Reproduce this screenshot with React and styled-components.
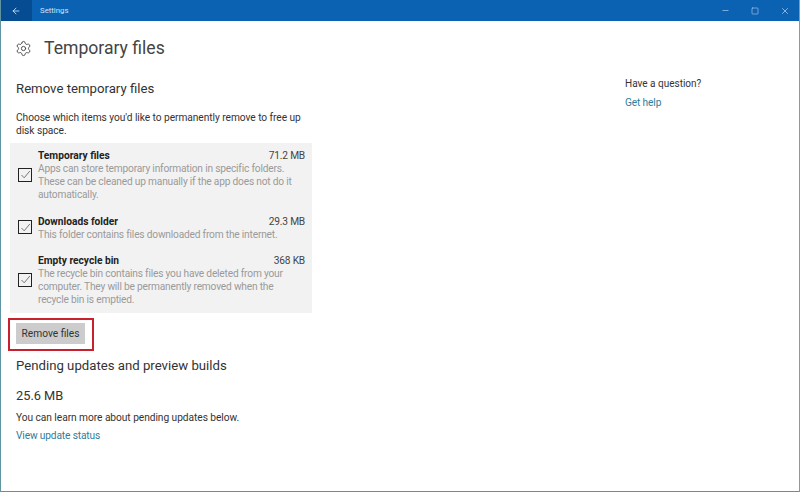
import React from 'react';
import styled, { createGlobalStyle } from 'styled-components';
import { ArrowLeft, Minus, Square, X, Settings } from 'lucide-react';

const Global = createGlobalStyle`
  html, body {
    margin: 0;
    padding: 0;
    background: #fff;
  }
  body {
    font-family: Roboto, "Open Sans", "Liberation Sans", sans-serif;
    color: #333;
  }
`;

const Win = styled.div`
  width: 800px;
  height: 492px;
  box-sizing: border-box;
  display: flex;
  flex-direction: column;
  overflow: hidden;
  background: #fff;
  border-left: 1px solid #5f95a0;
  border-right: 1px solid #8a9aa5;
  border-bottom: 1px solid #6f8a9a;
`;

const TitleBar = styled.div`
  height: 21px;
  flex: none;
  margin-left: -1px;
  margin-right: -1px;
  background: #0b62b3;
  color: #cfe3f5;
  display: flex;
  align-items: center;
`;

const BackBtn = styled.div`
  width: 32px;
  height: 100%;
  background: #054c93;
  display: flex;
  align-items: center;
  justify-content: center;
  color: #d6e6f5;
`;

const AppName = styled.span`
  font-size: 7.8px;
  margin-left: 8px;
  flex: 1;
`;

const WinBtn = styled.div`
  width: 30px;
  display: flex;
  justify-content: center;
  color: #d6e6f5;
`;

const Body = styled.div`
  flex: 1;
  display: grid;
  grid-template-columns: 624px 1fr;
`;

const Main = styled.div`
  padding: 15px 0 0 15px;
`;

const Header = styled.div`
  display: flex;
  align-items: center;
  gap: 12px;
  height: 24px;
  margin-left: -1px;
  color: #444;
`;

const Title = styled.h1`
  margin: 0;
  font-size: 17.6px;
  font-weight: 400;
  line-height: 24px;
  color: #444;
`;

const Heading = styled.h2`
  margin: ${p => p.$top}px 0 0;
  font-size: 13.2px;
  font-weight: 400;
  line-height: 20px;
  color: #333;
`;

const Para = styled.p`
  margin: ${p => p.$top}px 0 0;
  width: 290px;
  font-size: 10.2px;
  letter-spacing: -0.05px;
  line-height: 13px;
  color: #333;
`;

const Panel = styled.div`
  margin: 6px 0 0 -6px;
  width: 302px;
  height: 170px;
  box-sizing: border-box;
  padding: 6px 7px 0 8px;
  background: #f2f2f2;
  display: flex;
  flex-direction: column;
  gap: 13.5px;
`;

const Row = styled.div`
  display: flex;
  align-items: center;
  gap: 6px;
`;

const Check = styled.div`
  width: 14px;
  height: 14px;
  box-sizing: border-box;
  flex: none;
  border: 1.5px solid #222;
  display: flex;
  align-items: center;
  justify-content: center;
  color: #777;
  margin-top: -1px;
`;

const RowText = styled.div`
  flex: 1;
`;

const RowTop = styled.div`
  display: flex;
  justify-content: space-between;
  font-size: 10.2px;
  line-height: 13px;
`;

const RowName = styled.span`
  font-weight: 700;
  color: #222;
`;

const RowSize = styled.span`
  color: #444;
  letter-spacing: -0.2px;
`;

const RowDesc = styled.div`
  font-size: 10.2px;
  letter-spacing: -0.2px;
  line-height: 13px;
  color: #9a9a9a;
  width: 262px;
`;

const BtnFrame = styled.div`
  margin: 5px 0 0 -8px;
  width: 86px;
  height: 33px;
  box-sizing: border-box;
  border: 2px solid #c8202c;
  padding: 3px 6px;
`;

const Btn = styled.div`
  height: 21px;
  width: 69px;
  background: #ccc;
  font-size: 10.2px;
  line-height: 21px;
  text-align: center;
  color: #333;
`;

const Amount = styled.div`
  margin-top: 11px;
  font-size: 12.8px;
  line-height: 18px;
  color: #333;
`;

const Link = styled.a`
  display: block;
  margin-top: ${p => p.$top}px;
  font-size: 10.2px;
  letter-spacing: -0.15px;
  line-height: 13px;
  color: #2f7d9c;
`;

const Side = styled.div`
  padding-top: 56px;
`;

const Question = styled.div`
  font-size: 10px;
  line-height: 13px;
  color: #333;
`;

const rows = [
  {
    name: 'Temporary files',
    size: '71.2 MB',
    desc: 'Apps can store temporary information in specific folders. These can be cleaned up manually if the app does not do it automatically.',
  },
  {
    name: 'Downloads folder',
    size: '29.3 MB',
    desc: 'This folder contains files downloaded from the internet.',
  },
  {
    name: 'Empty recycle bin',
    size: '368 KB',
    desc: 'The recycle bin contains files you have deleted from your computer. They will be permanently removed when the recycle bin is emptied.',
  },
];

const App = () => (
  <Win>
    <Global />
    <TitleBar>
      <BackBtn><ArrowLeft size={10} strokeWidth={2} /></BackBtn>
      <AppName>Settings</AppName>
      <WinBtn><Minus size={9} strokeWidth={1.5} /></WinBtn>
      <WinBtn><Square size={8} strokeWidth={1.5} /></WinBtn>
      <WinBtn><X size={10} strokeWidth={1.5} /></WinBtn>
    </TitleBar>
    <Body>
      <Main>
        <Header>
          <Settings size={17} strokeWidth={1.3} />
          <Title>Temporary files</Title>
        </Header>
        <Heading $top={19}>Remove temporary files</Heading>
        <Para $top={12}>Choose which items you'd like to permanently remove to free up disk space.</Para>
        <Panel>
          {rows.map(r => (
            <Row key={r.name}>
              <Check>
                <svg width="11" height="11" viewBox="0 0 11 11" fill="none" stroke="currentColor" strokeWidth="1">
                  <path d="M1.5 6 L4.2 8.8 L9.8 2" />
                </svg>
              </Check>
              <RowText>
                <RowTop>
                  <RowName>{r.name}</RowName>
                  <RowSize>{r.size}</RowSize>
                </RowTop>
                <RowDesc>{r.desc}</RowDesc>
              </RowText>
            </Row>
          ))}
        </Panel>
        <BtnFrame><Btn>Remove files</Btn></BtnFrame>
        <Heading $top={5}>Pending updates and preview builds</Heading>
        <Amount>25.6 MB</Amount>
        <Para $top={6}>You can learn more about pending updates below.</Para>
        <Link $top={5}>View update status</Link>
      </Main>
      <Side>
        <Question>Have a question?</Question>
        <Link $top={6}>Get help</Link>
      </Side>
    </Body>
  </Win>
);

export default App;
